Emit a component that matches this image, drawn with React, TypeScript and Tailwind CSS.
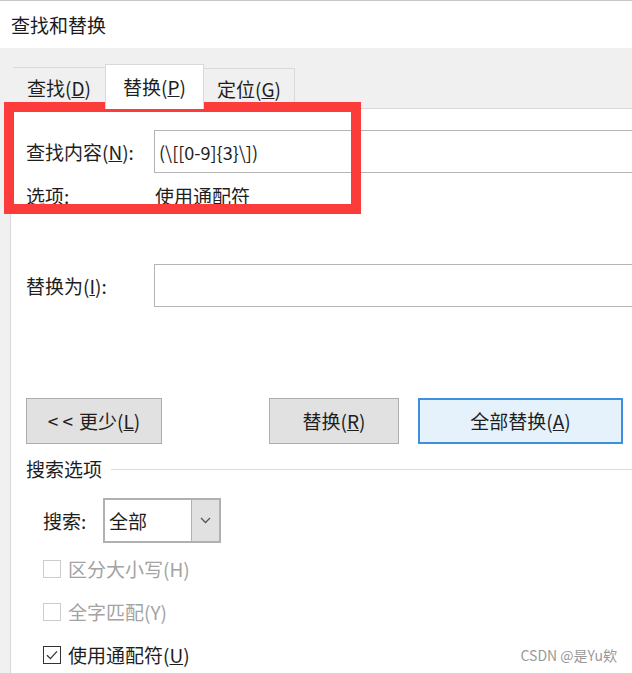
import { useState } from "react";

function Tab({ label, k, active, className }: { label: string; k: string; active?: boolean; className: string }) {
    return (
        <div
            className={`flex items-center justify-center text-[19px] text-[#1e1e1e] ${
                active ? 'bg-white border-x border-t border-[#d9d9d9] relative z-10 -mb-px' : 'border-t border-[#dadada]'
            } ${className}`}>
            <span>
                {label}(<u>{k}</u>)
            </span>
        </div>
    )
}

function Checkbox({ label, k, checked, disabled }: { label: string; k: string; checked?: boolean; disabled?: boolean }) {
    return (
        <div className="flex items-center h-6 pl-[17px]">
            <div
                className={`w-[18px] h-[18px] border flex items-center justify-center bg-white ${
                    disabled ? 'border-[#cccccc]' : 'border-[#333333]'
                }`}>
                {checked && (
                    <svg width="14" height="14" viewBox="0 0 14 14">
                        <path d="M2 7.2 L5.4 10.6 L12 3.4" fill="none" stroke="#333" strokeWidth="1.3" />
                    </svg>
                )}
            </div>
            <span className={`ml-[7px] text-[19px] ${disabled ? 'text-[#a3a3a3]' : 'text-[#1e1e1e]'}`}>
                {label}({disabled ? k : <u>{k}</u>})
            </span>
        </div>
    )
}

export default function App() {
    const [find, setFind] = useState('(\\[[0-9]{3}\\])')
    const [replace, setReplace] = useState('')

    return (
        <div className="w-[632px] h-[673px] bg-[#f0f0f0] overflow-hidden relative flex flex-col font-['Microsoft_YaHei','Noto_Sans_CJK_SC',sans-serif] leading-6 text-[#1e1e1e]">
            <div className="h-px bg-[#c6c6c6]" />
            <div className="h-[47px] bg-white flex items-center pl-[11px] text-[19px] text-[#1a1a1a]">查找和替换</div>

            {/* tabs */}
            <div className="flex items-end h-[60px] pl-[13px]">
                <Tab label="查找" k="D" className="w-[92px] h-[41px]" />
                <Tab label="替换" k="P" active className="w-[99px] h-[45px]" />
                <Tab label="定位" k="G" className="w-[91px] h-[40px] border-r" />
            </div>

            {/* panel */}
            <div className="ml-[10px] flex-1 bg-white border-l border-t border-[#d9d9d9] pl-[15px]">
                <div className="flex items-center h-[43px] mt-[21px]">
                    <span className="w-[128px] text-[19px]">查找内容(<u>N</u>):</span>
                    <input
                        value={find}
                        onChange={e => setFind(e.target.value)}
                        className="flex-1 h-full border border-r-0 border-[#b4b4b4] pl-[4px] text-[18px] outline-none font-['Microsoft_YaHei','Noto_Sans_CJK_SC',sans-serif]"
                    />
                </div>
                <div className="flex items-center h-6 mt-[11px] text-[19px]">
                    <span className="w-[129px]">选项:</span>
                    <span>使用通配符</span>
                </div>
                <div className="flex items-center h-[43px] mt-[56px]">
                    <span className="w-[128px] text-[19px]">替换为(<u>I</u>):</span>
                    <input
                        value={replace}
                        onChange={e => setReplace(e.target.value)}
                        className="flex-1 h-full border border-r-0 border-[#b4b4b4] outline-none"
                    />
                </div>

                <div className="flex items-center mt-[91px] h-[46px] text-[19px]">
                    <button className="w-[136px] h-full bg-[#e1e1e1] border border-[#adadad]">
                        <span className="mr-[6px]">&lt; &lt;</span>更少(<u>L</u>)
                    </button>
                    <button className="w-[130px] h-full ml-[107px] bg-[#e1e1e1] border border-[#adadad]">
                        替换(<u>R</u>)
                    </button>
                    <button className="w-[205px] h-full ml-[19px] bg-[#e5f1fb] border-2 border-[#3d8fe0]">
                        全部替换(<u>A</u>)
                    </button>
                </div>

                <div className="flex items-center h-6 mt-[13px]">
                    <span className="text-[19px]">搜索选项</span>
                    <div className="flex-1 h-px bg-[#dcdcdc] ml-[9px]" />
                </div>

                <div className="flex items-center h-[45px] mt-[17px] pl-[17px]">
                    <span className="w-[60px] text-[19px]">搜索:</span>
                    <div className="w-[118px] h-full flex border-2 border-[#b0b0b0]">
                        <span className="flex-1 flex items-center pl-[4px] text-[19px]">全部</span>
                        <div className="w-[28px] bg-[#e1e1e1] border-l border-[#b0b0b0] flex items-center justify-center">
                            <svg width="11" height="7" viewBox="0 0 11 7">
                                <path d="M1 1 L5.5 5.5 L10 1" fill="none" stroke="#555" strokeWidth="1.3" />
                            </svg>
                        </div>
                    </div>
                </div>

                <div className="mt-[14px]">
                    <Checkbox label="区分大小写" k="H" disabled />
                </div>
                <div className="mt-[19px]">
                    <Checkbox label="全字匹配" k="Y" disabled />
                </div>
                <div className="mt-[19px]">
                    <Checkbox label="使用通配符" k="U" checked />
                </div>
            </div>

            {/* annotation box */}
            <div className="absolute left-[4px] top-[102px] w-[357px] h-[112px] border-[10px] border-[#fc3b3b] pointer-events-none" />

            <div className="absolute right-[15px] bottom-[6px] text-[14px] text-[#9a9a9a] font-['Noto_Sans_CJK_SC',sans-serif]">
                CSDN @是Yu欸
            </div>
        </div>
    )
}
